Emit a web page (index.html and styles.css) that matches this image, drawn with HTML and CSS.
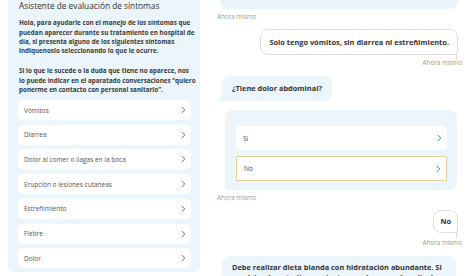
FILE: index.html
```html
<!DOCTYPE html>
<html lang="es">
<head>
  <meta charset="UTF-8" />
  <meta name="viewport" content="width=device-width, initial-scale=1.0"/>
  <title>Asistente de síntomas</title>
  <link rel="stylesheet" href="styles.css">
</head>
<body>
  <div class="page">
    <!-- panel de síntomas -->
    <div class="symptoms">
      <h1>Asistente de evaluación de síntomas</h1>
      <p class="intro">Hola, para ayudarle con el manejo de los síntomas que<br>puedan aparecer durante su tratamiento en hospital de<br>día, si presenta alguno de los siguientes síntomas<br>indiquenoslo seleccionando lo que le ocurre.</p>
      <p class="intro second">Si lo que le sucede o la duda que tiene no aparece, nos<br>lo puede indicar en el aparatado conversaciones “quiero<br>ponerme en contacto con personal sanitario”.</p>
      <ul class="symptom-list">
        <li class="symptom">Vómitos <svg class="chev" viewBox="0 0 6 9"><polyline points="1,1 4.5,4.5 1,8"/></svg></li>
        <li class="symptom">Diarrea <svg class="chev" viewBox="0 0 6 9"><polyline points="1,1 4.5,4.5 1,8"/></svg></li>
        <li class="symptom">Dolor al comer o llagas en la boca <svg class="chev" viewBox="0 0 6 9"><polyline points="1,1 4.5,4.5 1,8"/></svg></li>
        <li class="symptom">Erupción o lesiones cutaneas <svg class="chev" viewBox="0 0 6 9"><polyline points="1,1 4.5,4.5 1,8"/></svg></li>
        <li class="symptom">Estreñimiento <svg class="chev" viewBox="0 0 6 9"><polyline points="1,1 4.5,4.5 1,8"/></svg></li>
        <li class="symptom">Fiebre <svg class="chev" viewBox="0 0 6 9"><polyline points="1,1 4.5,4.5 1,8"/></svg></li>
        <li class="symptom">Dolor <svg class="chev" viewBox="0 0 6 9"><polyline points="1,1 4.5,4.5 1,8"/></svg></li>
      </ul>
    </div>

    <!-- conversación -->
    <div class="chat">
      <div class="prev-bubble"></div>
      <span class="time">Ahora mismo</span>

      <div class="bubble user first">Solo tengo vómitos, sin diarrea ni estreñimiento.</div>
      <span class="time right">Ahora mismo</span>

      <div class="bubble bot question">¿Tiene dolor abdominal?</div>

      <div class="options">
        <div class="option">Sí <svg class="chev blue" viewBox="0 0 6 9"><polyline points="1,1 4.5,4.5 1,8"/></svg></div>
        <div class="option selected">No <svg class="chev blue" viewBox="0 0 6 9"><polyline points="1,1 4.5,4.5 1,8"/></svg></div>
      </div>
      <span class="time">Ahora mismo</span>

      <div class="bubble user short">No</div>
      <span class="time right late">Ahora mismo</span>

      <div class="bubble bot answer">Debe realizar dieta blanda con hidratación abundante. Si persisten los vómitos contacte con el personal sanitario.</div>
    </div>
  </div>
</body>
</html>
```

FILE: styles.css
```css
body {
  margin: 0;
  background: #fff;
  font-family: 'Open Sans', sans-serif;
  color: #333;
}
.page {
  display: flex;
  width: 470px;
  height: 276px;
  overflow: hidden;
}

/* panel izquierdo */
.symptoms {
  width: 172px;
  height: 272px;
  margin-left: 8px;
  padding: 0 9px 0 11px;
  background-color: #ebf5fb;
  border-radius: 0 0 6px 6px;
  flex-shrink: 0;
  overflow: hidden;
}
h1 {
  margin: 0;
  font-size: 8.3px;
  line-height: 12px;
  font-weight: 400;
  color: #333;
}
.intro {
  margin: 6.4px 0 0;
  font-size: 6.3px;
  line-height: 9.3px;
  font-weight: 700;
  color: #3a3a3a;
  white-space: nowrap;
}
.intro.second {
  margin-top: 10.8px;
}
.symptom-list {
  list-style: none;
  margin: 5.8px 0 0 -1px;
  padding: 0;
  display: flex;
  flex-direction: column;
  gap: 4.7px;
}
.symptom {
  height: 20px;
  display: flex;
  align-items: center;
  justify-content: space-between;
  padding: 0 5px 0 6px;
  background: #fff;
  border-radius: 5px;
  font-size: 6.5px;
  color: #555;
  flex-shrink: 0;
}
.chev {
  width: 5px;
  height: 8px;
  fill: none;
  stroke: #56748c;
  stroke-width: 1.2;
}
.chev.blue {
  stroke: #2f7fbd;
}

/* chat */
.chat {
  flex: 1;
  display: flex;
  flex-direction: column;
  margin-left: 10px;
  padding: 0 8px 0 7px;
}
.chat > * {
  flex-shrink: 0;
}
.prev-bubble {
  display: block;
  height: 9px;
  margin: 0 4px 0 3px;
  background: #e9f4fb;
  border-radius: 0 0 8px 8px;
}
.bubble {
  position: relative;
  font-size: 7.4px;
  font-weight: 700;
  color: #333;
  line-height: 10px;
}
.bubble.bot {
  background: #ebf5fb;
  align-self: flex-start;
  margin-left: 5px;
  border-radius: 8px 8px 8px 0;
}
.bubble.bot::before {
  content: "";
  position: absolute;
  left: -5px;
  bottom: 0;
  width: 5px;
  height: 6px;
  background: #ebf5fb;
  clip-path: polygon(100% 0, 100% 100%, 0 100%);
}
.bubble.user {
  align-self: flex-end;
  margin-right: 4px;
  background: #fff;
  border: 1px solid #dedede;
  border-radius: 8px 8px 0 8px;
  padding: 0 8px;
  text-align: center;
}
.bubble.user::after {
  content: "";
  position: absolute;
  right: -6px;
  bottom: -6px;
  width: 6px;
  height: 6px;
  border-left: 1px solid #dedede;
  border-top: 1px solid #dedede;
  background: #fff;
  clip-path: polygon(0 0, 100% 100%, 0 100%);
}
.bubble.first {
  margin-top: 8px;
  height: 24px;
  line-height: 24px;
}
.bubble.short {
  margin-top: 8px;
  height: 21px;
  line-height: 21px;
  padding: 0 6px;
}
.bubble.question {
  margin-top: 9px;
  height: 25px;
  line-height: 25px;
  padding: 0 10px;
}
.bubble.answer {
  margin-top: 9px;
  margin-right: 6px;
  padding: 6px 10px;
}
.time {
  margin-top: 4px;
  font-size: 6.3px;
  line-height: 8px;
  color: #9a9a9a;
  align-self: flex-start;
}
.time.right {
  align-self: flex-end;
}
.time.late {
  margin-top: 6px;
}
.options {
  margin: 9px 5px 0 8px;
  padding: 16px 10px 9px 11px;
  background: #ebf5fb;
  border-radius: 8px 8px 8px 0;
  display: flex;
  flex-direction: column;
  gap: 6px;
}
.option {
  height: 24px;
  display: flex;
  align-items: center;
  justify-content: space-between;
  padding: 0 5px 0 7px;
  background: #fff;
  border-radius: 4px;
  font-size: 6.6px;
  color: #444;
  box-sizing: border-box;
}
.option.selected {
  border: 1px solid #e3cf95;
  border-radius: 1px;
  height: 25px;
}
```
